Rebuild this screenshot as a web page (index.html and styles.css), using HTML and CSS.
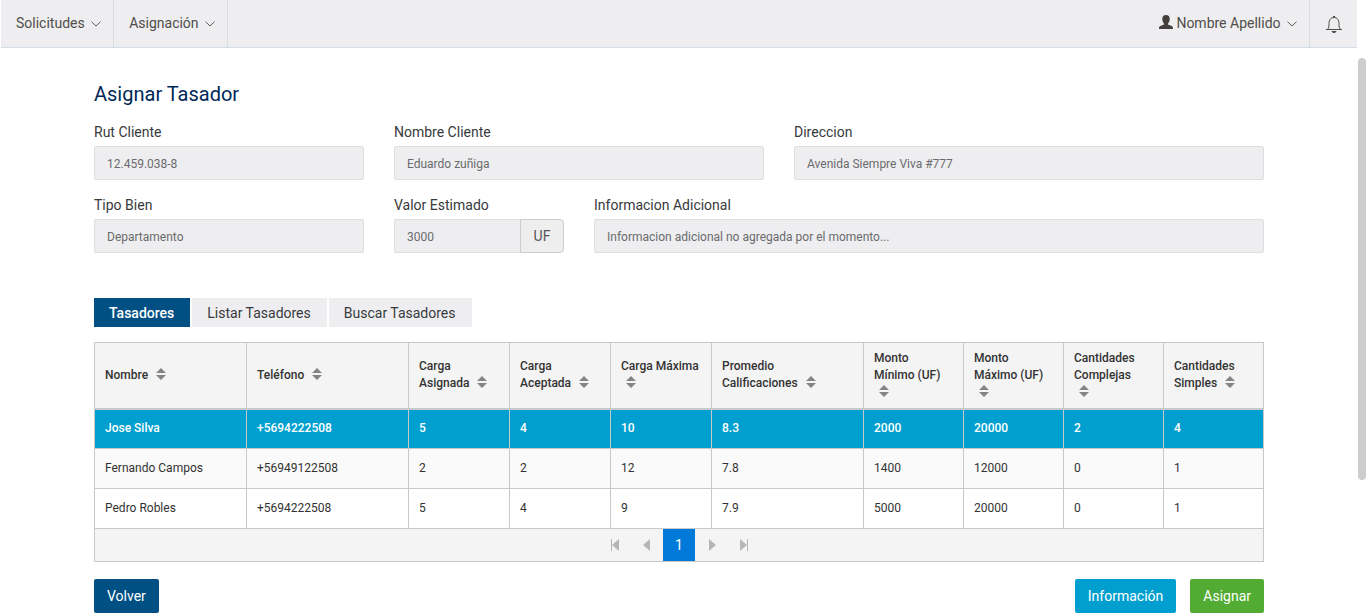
FILE: index.html
```html
<!DOCTYPE html>
<html lang="es">
<head>
<meta charset="utf-8">
<title>Asignar Tasador</title>
<link rel="stylesheet" href="styles.css">
</head>
<body>
<svg width="0" height="0" class="sprite" aria-hidden="true">
  <symbol id="chevron" viewBox="0 0 10 6"><path d="M.5 .7 5 5 9.500 .7" fill="none" stroke="currentColor" stroke-width=".9"/></symbol>
  <symbol id="sort" viewBox="0 0 10 12"><path d="M5 0 10 5H0ZM0 7h10L5 12Z" fill="#848484"/></symbol>
</svg>
<div class="page">
  <header class="navbar">
    <nav class="menu">
      <button class="menu-item" type="button">Solicitudes <svg class="chevron"><use href="#chevron"/></svg></button>
      <button class="menu-item" type="button">Asignación <svg class="chevron"><use href="#chevron"/></svg></button>
    </nav>
    <div class="account">
      <button class="user" type="button"><svg class="user-icon" viewBox="0 0 14 14"><path d="M7 0C9.400 0 10.800 1.500 10.700 4C10.600 6.300 9.900 7.700 9 8.600V9.600L12.800 11C13.700 11.400 14 12.500 14 14H0C0 12.500.3 11.400 1.200 11L5 9.600V8.600C4.100 7.700 3.400 6.300 3.300 4C3.200 1.500 4.600 0 7 0Z" fill="currentColor"/></svg>Nombre Apellido <svg class="chevron"><use href="#chevron"/></svg></button>
      <button class="bell" type="button" aria-label="Notificaciones"><svg class="bell-icon" viewBox="0 0 18 18"><path d="M1 13.500H17M2.500 13.500C3.800 12 4 10.500 4 7.500C4 4 5.800 1.500 9 1.500S14 4 14 7.500C14 10.500 14.200 12 15.500 13.500" fill="none" stroke="currentColor"/><path d="M8 0h2v1.500H8ZM6.500 15h5C11 16.600 10 17 9 17S7 16.600 6.500 15Z" fill="currentColor"/></svg></button>
    </div>
  </header>
  <main class="content">
    <h1 class="title">Asignar Tasador</h1>
    <form class="form">
      <div class="field span-3"><label for="rut">Rut Cliente</label><input id="rut" value="12.459.038-8" readonly></div>
      <div class="field span-4"><label for="nombre">Nombre Cliente</label><input id="nombre" value="Eduardo zuñiga" readonly></div>
      <div class="field span-5"><label for="direccion">Direccion</label><input id="direccion" value="Avenida Siempre Viva #777" readonly></div>
      <div class="field span-3"><label for="tipo">Tipo Bien</label><input id="tipo" value="Departamento" readonly></div>
      <div class="field span-2"><label for="valor">Valor Estimado</label><div class="group"><input id="valor" value="3000" readonly><span class="unit">UF</span></div></div>
      <div class="field span-7"><label for="info">Informacion Adicional</label><input id="info" value="Informacion adicional no agregada por el momento..." readonly></div>
    </form>
    <div class="tabs" role="tablist">
      <button class="tab active" type="button" role="tab" aria-selected="true">Tasadores</button>
      <button class="tab" type="button" role="tab" aria-selected="false">Listar Tasadores</button>
      <button class="tab" type="button" role="tab" aria-selected="false">Buscar Tasadores</button>
    </div>
    <table class="grid">
      <colgroup><col class="w-name"><col class="w-phone"><col class="w-load"><col class="w-load"><col class="w-load"><col class="w-name"><col class="w-amount"><col class="w-amount"><col class="w-amount"><col class="w-amount"></colgroup>
      <thead>
        <tr>
          <th>Nombre <svg class="sort"><use href="#sort"/></svg></th>
          <th>Teléfono <svg class="sort"><use href="#sort"/></svg></th>
          <th>Carga Asignada <svg class="sort"><use href="#sort"/></svg></th>
          <th>Carga Aceptada <svg class="sort"><use href="#sort"/></svg></th>
          <th>Carga Máxima <svg class="sort"><use href="#sort"/></svg></th>
          <th>Promedio<br>Calificaciones <svg class="sort"><use href="#sort"/></svg></th>
          <th>Monto<br>Mínimo (UF) <svg class="sort"><use href="#sort"/></svg></th>
          <th>Monto<br>Máximo (UF) <svg class="sort"><use href="#sort"/></svg></th>
          <th>Cantidades Complejas <svg class="sort"><use href="#sort"/></svg></th>
          <th>Cantidades Simples <svg class="sort"><use href="#sort"/></svg></th>
        </tr>
      </thead>
      <tbody>
        <tr class="selected"><td>Jose Silva</td><td>+5694222508</td><td>5</td><td>4</td><td>10</td><td>8.3</td><td>2000</td><td>20000</td><td>2</td><td>4</td></tr>
        <tr class="even"><td>Fernando Campos</td><td>+56949122508</td><td>2</td><td>2</td><td>12</td><td>7.8</td><td>1400</td><td>12000</td><td>0</td><td>1</td></tr>
        <tr><td>Pedro Robles</td><td>+5694222508</td><td>5</td><td>4</td><td>9</td><td>7.9</td><td>5000</td><td>20000</td><td>0</td><td>1</td></tr>
      </tbody>
    </table>
    <nav class="pager" aria-label="Paginación">
      <button class="page-link" type="button" aria-label="Primera"><svg class="arrow" viewBox="0 0 10 12"><path d="M1 0h1v12H1ZM9 0v12L2 6Z" fill="currentColor"/></svg></button>
      <button class="page-link" type="button" aria-label="Anterior"><svg class="arrow" viewBox="0 0 10 12"><path d="M8 0v12L1 6Z" fill="currentColor"/></svg></button>
      <button class="page-link current" type="button">1</button>
      <button class="page-link" type="button" aria-label="Siguiente"><svg class="arrow" viewBox="0 0 10 12"><path d="M3 0v12L10 6Z" fill="currentColor"/></svg></button>
      <button class="page-link" type="button" aria-label="Última"><svg class="arrow" viewBox="0 0 10 12"><path d="M9 0h1v12H9ZM2 0v12L9 6Z" fill="currentColor"/></svg></button>
    </nav>
    <div class="actions">
      <button class="btn navy" type="button">Volver</button>
      <div class="actions-end">
        <button class="btn cyan" type="button">Información</button>
        <button class="btn green" type="button">Asignar</button>
      </div>
    </div>
  </main>
</div>
<div class="scrollbar" aria-hidden="true"><div class="thumb"></div></div>
</body>
</html>
```
FILE: styles.css
```css
* { box-sizing: border-box; }
body {
  margin: 0;
  display: flex;
  min-height: 100vh;
  background: #fff;
  color: #373a3c;
  font: 14px/20px Roboto, sans-serif;
}
button, input { font: inherit; color: inherit; margin: 0; }
button { border: 0; background: none; padding: 0; cursor: pointer; }
.sprite { position: absolute; }
.page { flex: 1; min-width: 0; }

.navbar {
  display: flex;
  justify-content: space-between;
  height: 48px;
  margin: 0 1px;
  background: #eeeef0;
  border-bottom: 1px solid #d3dde6;
  color: #514d4a;
}
.menu, .account { display: flex; }
.menu-item { padding: 0 12px 2px 15px; border-right: 1px solid #dadcdf; }
.user { padding: 0 12px 2px; }
.bell { width: 48px; border-left: 1px solid #dadcdf; }
.chevron { width: 10px; height: 6px; margin-left: 3px; vertical-align: 1px; }
.user-icon { width: 14px; height: 14px; margin-right: 3px; vertical-align: -1px; color: #43403e; }
.bell-icon { width: 18px; height: 18px; vertical-align: middle; }

.content { max-width: 1200px; margin: 0 auto; padding: 34px 15px 0; }
.title { margin: 0 0 16px; font-size: 20px; line-height: 24px; font-weight: 400; color: #002857; }
.form {
  display: grid;
  grid-template-columns: repeat(12, minmax(0, 1fr));
  gap: 15px 30px;
}
.field label { display: block; margin-bottom: 4px; }
.field input {
  display: block;
  width: 100%;
  height: 34px;
  padding: 2px 12px 0;
  border: 1px solid #dddee0;
  border-radius: 2px;
  background: #eeeef0;
  color: #6b6b6e;
  font-size: 12px;
}
.span-2 { grid-column: span 2; }
.span-3 { grid-column: span 3; }
.span-4 { grid-column: span 4; }
.span-5 { grid-column: span 5; }
.span-7 { grid-column: span 7; }
.group { display: flex; }
.group input { flex: 1; min-width: 0; border-right: 0; border-radius: 2px 0 0 2px; }
.unit {
  width: 44px;
  line-height: 32px;
  text-align: center;
  border: 1px solid #ccc;
  border-radius: 0 4px 4px 0;
  background: #eee;
  color: #555;
}

.tabs { display: flex; gap: 2px; margin: 45px 0 15px; }
.tab { height: 29px; padding: 0 16px 0 15px; background: #eeeef0; }
.tab.active { background: #005083; color: #fff; font-weight: 500; }

.grid { width: 100%; table-layout: fixed; border-collapse: collapse; font-size: 12px; line-height: 17px; color: #333; }
.w-name { width: 152px; }
.w-phone { width: 162px; }
.w-load { width: 101px; }
.w-amount { width: 100px; }
.grid th, .grid td { padding: 0 10px; border: 1px solid #c8c8c8; text-align: left; vertical-align: middle; }
.grid th { height: 66px; background: #f4f4f4; border-bottom-width: 2px; font-weight: 500; }
.grid td { height: 40px; }
.even { background: #fafafa; }
.selected { background: #009fcf; color: #fff; font-weight: 500; }
.sort { width: 10px; height: 12px; margin: 0 6px 0 5px; vertical-align: -1px; }

.pager { display: flex; justify-content: center; border: 1px solid #c8c8c8; border-top: 0; background: #f4f4f4; }
.page-link { width: 32px; height: 32px; padding-bottom: 2px; color: #b4b6b8; }
.page-link.current { padding: 0; background: #007ad9; color: #fff; }
.arrow { width: 10px; height: 12px; vertical-align: middle; }

.actions { display: flex; justify-content: space-between; margin-top: 17px; }
.actions-end { display: flex; gap: 14px; }
.btn { height: 34px; padding: 0 13px; border-radius: 2px; color: #fff; }
.navy { background: #005083; }
.cyan { background: #009fcf; }
.green { background: #52ab32; }

.scrollbar { width: 8px; height: 100vh; padding-top: 58px; }
.thumb { height: 76%; border-radius: 4px; background: #cdcdcf; }
```
